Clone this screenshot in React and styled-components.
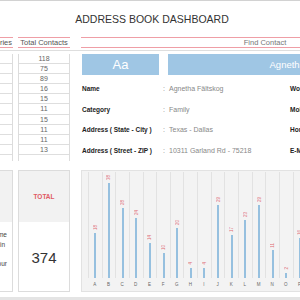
import styled, { createGlobalStyle } from 'styled-components';

const GlobalStyle = createGlobalStyle`
  body {
    margin: 0;
    background: #fff;
    font-family: 'Liberation Sans', Arial, sans-serif;
  }
`;

const categories = [
  { name: 'Family', total: 118 },
  { name: 'Friends', total: 75 },
  { name: 'Work', total: 89 },
  { name: 'School', total: 16 },
  { name: 'Club', total: 15 },
  { name: 'Church', total: 11 },
  { name: 'Gym', total: 15 },
  { name: 'Neighbors', total: 11 },
  { name: 'Business', total: 11 },
  { name: 'Others', total: 13 },
];

const letters = [
  ['A', 18], ['B', 38], ['C', 28], ['D', 24], ['E', 14], ['F', 10], ['G', 20], ['H', 4],
  ['I', 4], ['J', 29], ['K', 17], ['L', 23], ['M', 29], ['N', 11], ['O', 2], ['P', 16],
];

const details = [
  ['Name', 'Agnetha Fältskog', 'Work'],
  ['Category', 'Family', 'Mobile'],
  ['Address ( State - City )', 'Texas - Dallas', 'Home'],
  ['Address ( Street - ZIP )', '10311 Garland Rd - 75218', 'E-Mail'],
];

const Page = styled.div`
  width: 300px;
  height: 300px;
  overflow: hidden;
  box-sizing: border-box;
  border-top: 1.5px solid #d2d2d2;
`;

const Title = styled.h1`
  margin: 0;
  height: 36px;
  line-height: 37px;
  text-align: center;
  font-size: 10.5px;
  font-weight: normal;
  color: #333;
  padding-left: 4px;
`;

const HeaderBand = styled.div`
  border-bottom: 1px solid #dedede;
  padding-bottom: 2px;
`;

const Grid = styled.div`
  display: grid;
  grid-template-columns: 60px 52px 500px;
  column-gap: 5px;
  margin-left: -47px;
  margin-top: ${p => p.$top || 0}px;
`;

const HeadCell = styled.div`
  height: 9px;
  line-height: 10px;
  border-top: 1.5px solid #ef9ea6;
  border-bottom: 1.5px solid #ef9ea6;
  font-size: 7.5px;
  color: #555;
  white-space: nowrap;
  overflow: hidden;
  text-align: ${p => p.$align || 'center'};
  padding-right: ${p => (p.$align === 'right' ? 1 : 0)}px;
`;

const FindHead = styled(HeadCell)`
  width: 368px;
  margin-left: 6px;
  color: #777;
`;

const Table = styled.div`
  border-left: 1px solid #dcdcdc;
  border-right: 1px solid #dcdcdc;
`;

const Cell = styled.div`
  box-sizing: border-box;
  height: 10.2px;
  line-height: 10px;
  border-bottom: 1px solid #dedede;
  font-size: 7px;
  color: #666;
  text-align: center;
  white-space: nowrap;
`;

const Finder = styled.div`
  margin-left: 6px;
`;

const SearchRow = styled.div`
  display: flex;
  gap: 9px;
  margin-left: 1px;
`;

const BlueBox = styled.div`
  flex: none;
  width: ${p => p.$w}px;
  height: 21px;
  line-height: 21px;
  background: #9fc6e4;
  color: #fff;
  text-align: center;
  font-size: ${p => p.$size}px;
  white-space: nowrap;
`;

const Details = styled.div`
  display: grid;
  grid-template-columns: 82px 6px 120px 60px;
  grid-auto-rows: 20.7px;
  align-items: center;
  margin-top: 3.5px;
  white-space: nowrap;
`;

const Label = styled.div`
  padding-left: 1px;
  font-size: 6.5px;
  font-weight: bold;
  color: #222;
`;

const Value = styled.div`
  font-size: 7px;
  color: #888;
`;

const SideBox = styled.div`
  height: 122px;
  box-sizing: border-box;
  border: 1px solid #dcdcdc;
  display: flex;
  flex-direction: column;
`;

const SideHead = styled.div`
  height: 51px;
  background: #f2f2f2;
  display: flex;
  align-items: center;
  justify-content: center;
  font-size: 6.5px;
  font-weight: bold;
  color: #e05a64;
`;

const SideBody = styled.div`
  flex: 1;
  display: flex;
  flex-direction: column;
  justify-content: center;
  align-items: center;
`;

const Big = styled.div`
  font-size: 15px;
  color: #333;
  margin-top: 2px;
`;

const Note = styled.div`
  align-self: stretch;
  margin-top: -14px;
`;

const NoteLine = styled.div`
  font-size: 6.5px;
  line-height: 9.6px;
  color: #444;
  text-align: right;
  white-space: nowrap;
  overflow: hidden;
  padding-right: ${p => p.$pad}px;
`;

const ChartBox = styled.div`
  margin-left: 6px;
  width: 260px;
  height: 122px;
  box-sizing: border-box;
  border: 1px solid #e2e2e2;
  background: #f3f3f3;
  padding: 1px 0 0 6px;
`;

const Plot = styled.div`
  display: flex;
  height: 106px;
`;

const Column = styled.div`
  flex: none;
  width: 13.65px;
  box-sizing: border-box;
  border-left: 1px solid #e2e2e2;
  display: flex;
  flex-direction: column;
  justify-content: flex-end;
  align-items: center;
`;

const BarLabel = styled.div`
  writing-mode: vertical-rl;
  transform: rotate(180deg);
  font-size: 4.5px;
  line-height: 5px;
  color: #e06a72;
  margin-bottom: 3px;
`;

const Bar = styled.div`
  width: 2px;
  background: #96c0df;
`;

const Axis = styled.div`
  display: flex;
`;

const Tick = styled.div`
  flex: none;
  width: 13.65px;
  text-align: center;
  font-size: 4.5px;
  line-height: 14px;
  color: #666;
`;

const Footer = styled.div`
  margin-top: 5px;
  height: 3px;
  background: #e4e4e4;
`;

export default function App() {
  const total = categories.reduce((s, c) => s + c.total, 0);
  return (
    <Page>
      <GlobalStyle />
      <Title>ADDRESS BOOK DASHBOARD</Title>
      <HeaderBand>
        <Grid>
          <HeadCell $align="right">Categories</HeadCell>
          <HeadCell>Total Contacts</HeadCell>
          <FindHead>Find Contact</FindHead>
        </Grid>
      </HeaderBand>

      <Grid $top={2.5}>
        <Table>
          {categories.map(c => (
            <Cell key={c.name}>{c.name}</Cell>
          ))}
        </Table>
        <Table>
          {categories.map(c => (
            <Cell key={c.name}>{c.total}</Cell>
          ))}
        </Table>
        <Finder>
          <SearchRow>
            <BlueBox $w={77} $size={13}>Aa</BlueBox>
            <BlueBox $w={277} $size={9.5}>Agnetha Fältskog</BlueBox>
          </SearchRow>
          <Details>
            {details.map(([label, value, side]) => [
              <Label key={label}>{label}</Label>,
              <Value key={label + ':'}>:</Value>,
              <Value key={value}>{value}</Value>,
              <Label key={side}>{side}</Label>,
            ])}
          </Details>
        </Finder>
      </Grid>

      <Grid $top={9}>
        <SideBox>
          <SideHead>INFO</SideHead>
          <SideBody>
            <Note>
              <NoteLine $pad={5}>Select a name</NoteLine>
              <NoteLine $pad={7}>to view it in</NoteLine>
              <NoteLine $pad={16}>full detail</NoteLine>
              <NoteLine $pad={5}>for all of your</NoteLine>
            </Note>
          </SideBody>
        </SideBox>
        <SideBox>
          <SideHead>TOTAL</SideHead>
          <SideBody>
            <Big>{total}</Big>
          </SideBody>
        </SideBox>
        <ChartBox>
          <Plot>
            {letters.map(([l, v]) => (
              <Column key={l}>
                <BarLabel>{v}</BarLabel>
                <Bar style={{ height: v * 2.5 }} />
              </Column>
            ))}
          </Plot>
          <Axis>
            {letters.map(([l]) => (
              <Tick key={l}>{l}</Tick>
            ))}
          </Axis>
        </ChartBox>
      </Grid>
      <Footer />
    </Page>
  );
}
